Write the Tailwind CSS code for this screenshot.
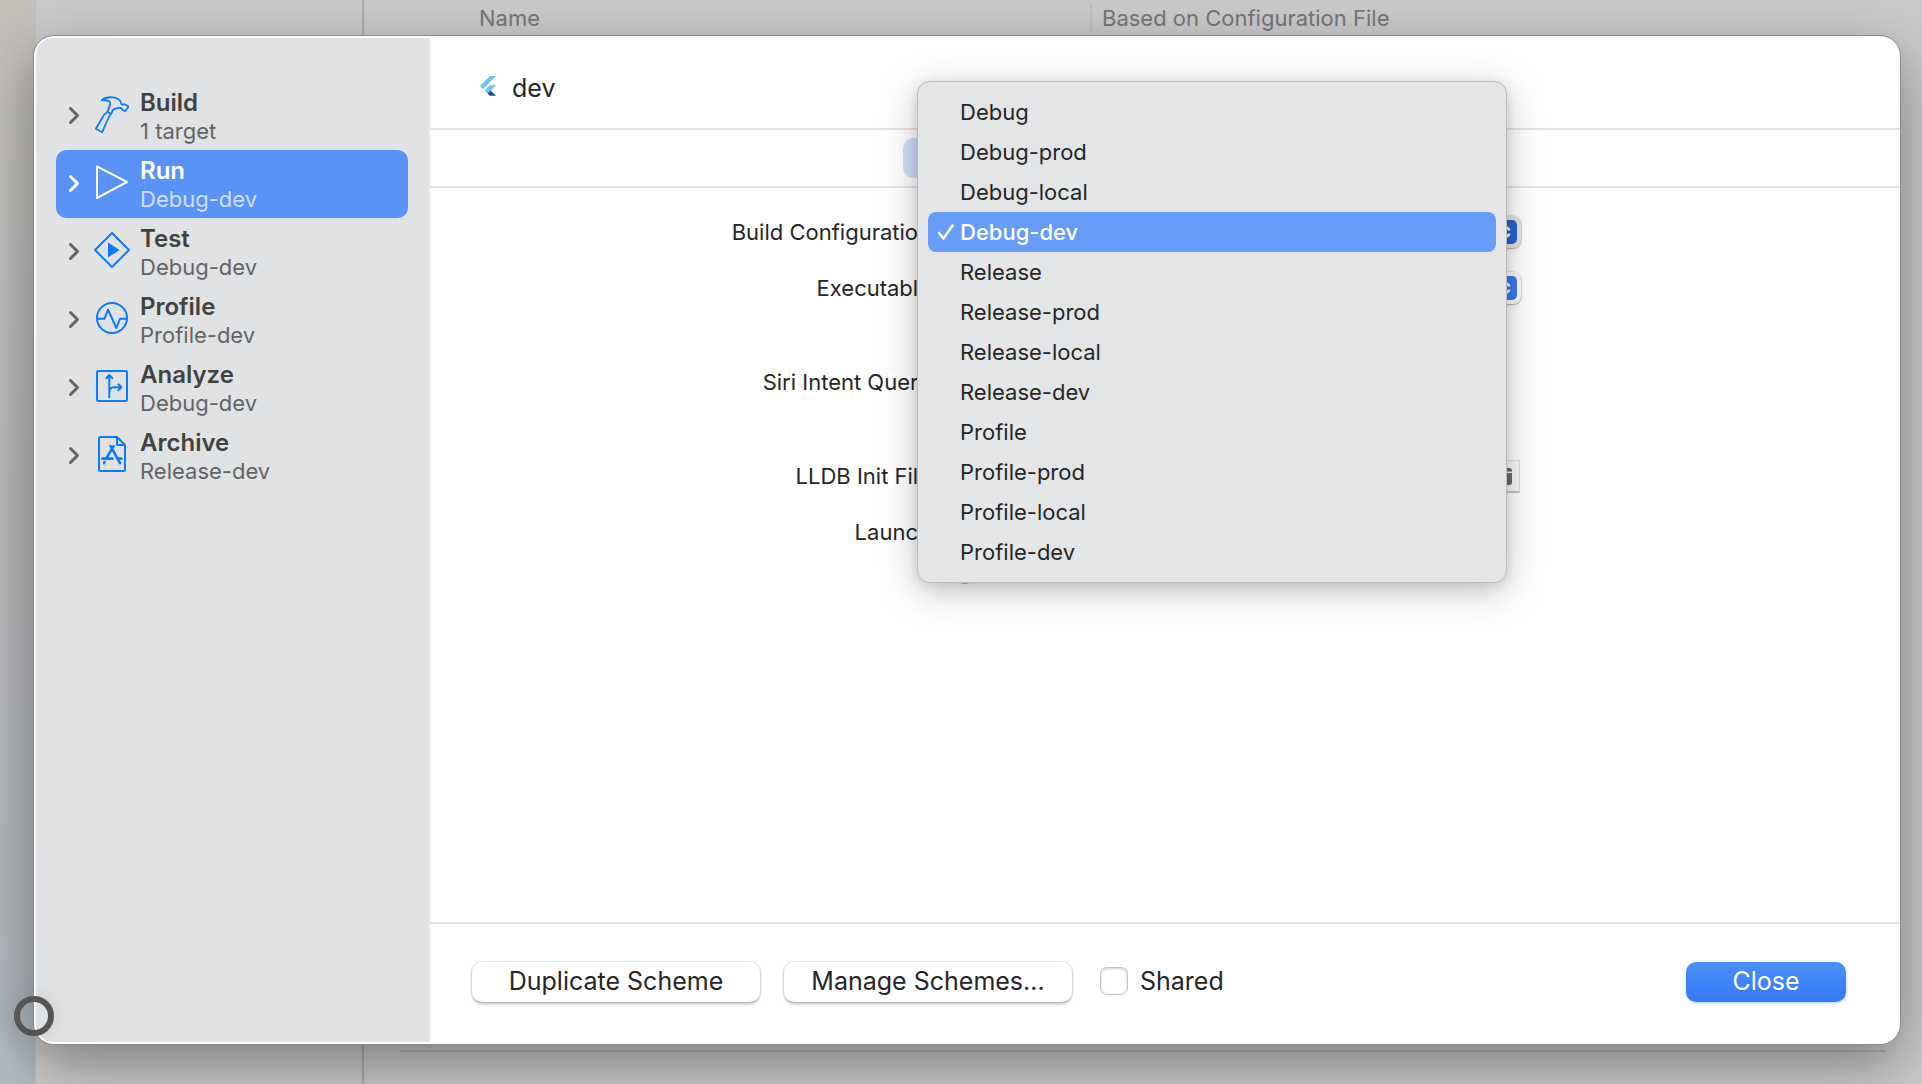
<!DOCTYPE html>
<html lang="en">
  <head>
    <meta charset="UTF-8" />
    <meta name="viewport" content="width=device-width, initial-scale=1.0" />
    <title>Edit Scheme</title>
    <script src="https://cdn.jsdelivr.net/npm/@tailwindcss/browser@4"></script>
  </head>
  <body class="relative h-screen overflow-hidden bg-[#cbcbcb] font-['Inter',sans-serif] text-[22px] leading-7 text-[#262626]">
    <!-- Project window behind the sheet -->
    <div class="flex h-full">
      <div class="w-[35px] bg-linear-to-b from-[#c4c1bb] via-[#b9b9bb] to-[#b2bac0]"></div>
      <div class="w-[329px] border-l border-r-2 border-l-[#bdbdbd] border-r-[#aeaeae]"></div>
      <div class="flex flex-1 flex-col justify-between">
        <div class="flex h-9 items-center text-[#777777]">
          <div class="w-[728px] border-r-2 border-[#c0c0c0] pl-[115px]">Name</div>
          <div class="pl-[10px]">Based on Configuration File</div>
        </div>
        <div class="mr-9 ml-9 h-[34px] border-t-2 border-[#b4b4b4]"></div>
      </div>
    </div>

    <!-- Scheme editor -->
    <div
      role="dialog"
      aria-label="Edit scheme"
      class="absolute top-9 right-[22px] bottom-10 left-[34px] flex rounded-[20px] bg-white shadow-[0_0_0_1px_#8c8c8c,0_20px_60px_rgba(0,0,0,0.4)]"
    >
      <nav class="my-[2px] ml-[2px] w-[394px] rounded-l-[18px] border-r-2 border-[#e8e8e8] bg-[#e1e2e4] px-5 pt-11">
        <ul>
          <li>
            <button class="flex h-17 w-full items-center rounded-[10px] pl-3 text-left text-[#636466]">
              <svg class="h-5 w-3" viewBox="0 0 12 20" fill="none" stroke="currentColor" stroke-width="3" stroke-linecap="round" stroke-linejoin="round"><path d="M2.5 2.5 9.5 9.5 2.5 16.5" /></svg>
              <svg class="ml-[14px] h-10 w-9 text-[#0a7bff]" viewBox="0 0 36 40" fill="none" stroke="currentColor" stroke-width="1.8" stroke-linejoin="round">
                <path d="M7.8 4.2C10.5 1.8 14 1 18.5 1.300 23 1.600 26.200 3.300 27.200 7.200 27.600 8.700 28.200 9 29.300 8.600L30.400 8.200 34.200 10.200 34 11.500 31.200 15 29.600 14.600C28.200 14.400 28.600 12.200 26.800 12 24 11.500 21.500 12.300 19.200 13.800 18 14.600 18.300 16 17.500 17.200 15.800 19.600 14.200 21.600 13.300 24.500L8.200 36.200 1.800 32.800 9.600 19.600C11 17.400 13.800 16.600 14.200 14.200 15 11 16.400 8.800 16.200 6.800 15.800 4 11.500 4.200 7.800 4.200Z" />
                <path d="M13.8 16.3 17.5 18" />
              </svg>
              <span class="ml-[10px] pt-[2px]">
                <span class="block text-[24px] font-semibold text-[#414242]">Build</span>
                <span class="block">1 target</span>
              </span>
            </button>
          </li>
          <li>
            <button aria-current="true" class="flex h-17 w-full items-center rounded-[10px] bg-[#5a93f7] pl-3 text-left text-[#cfdffc]">
              <svg class="h-5 w-3 text-white" viewBox="0 0 12 20" fill="none" stroke="currentColor" stroke-width="3" stroke-linecap="round" stroke-linejoin="round"><path d="M2.5 2.5 9.5 9.5 2.5 16.5" /></svg>
              <svg class="ml-[14px] h-10 w-9 text-white" viewBox="0 0 36 40" fill="none" stroke="currentColor" stroke-width="2" stroke-linejoin="round"><path d="M3 2.4 33 18 3 34Z" /></svg>
              <span class="ml-[10px] pt-[2px]">
                <span class="block text-[24px] font-semibold text-white">Run</span>
                <span class="block">Debug-dev</span>
              </span>
            </button>
          </li>
          <li>
            <button class="flex h-17 w-full items-center rounded-[10px] pl-3 text-left text-[#636466]">
              <svg class="h-5 w-3" viewBox="0 0 12 20" fill="none" stroke="currentColor" stroke-width="3" stroke-linecap="round" stroke-linejoin="round"><path d="M2.5 2.5 9.5 9.5 2.5 16.5" /></svg>
              <svg class="ml-[14px] h-10 w-9 text-[#0a7bff]" viewBox="0 0 36 40" fill="none" stroke="currentColor" stroke-width="2" stroke-linejoin="round">
                <path d="M18 1 35 18 18 35 1 18Z" />
                <path d="M14 10.5 25.5 18 14 25.5Z" fill="currentColor" stroke="none" />
              </svg>
              <span class="ml-[10px] pt-[2px]">
                <span class="block text-[24px] font-semibold text-[#414242]">Test</span>
                <span class="block">Debug-dev</span>
              </span>
            </button>
          </li>
          <li>
            <button class="flex h-17 w-full items-center rounded-[10px] pl-3 text-left text-[#636466]">
              <svg class="h-5 w-3" viewBox="0 0 12 20" fill="none" stroke="currentColor" stroke-width="3" stroke-linecap="round" stroke-linejoin="round"><path d="M2.5 2.5 9.5 9.5 2.5 16.5" /></svg>
              <svg class="ml-[14px] h-10 w-9 text-[#0a7bff]" viewBox="0 0 36 40" fill="none" stroke="currentColor" stroke-width="2" stroke-linejoin="round">
                <circle cx="18" cy="18" r="15" />
                <path d="M3 18.8H10.4L14 9.5 22.3 28 26 18.8H33" />
              </svg>
              <span class="ml-[10px] pt-[2px]">
                <span class="block text-[24px] font-semibold text-[#414242]">Profile</span>
                <span class="block">Profile-dev</span>
              </span>
            </button>
          </li>
          <li>
            <button class="flex h-17 w-full items-center rounded-[10px] pl-3 text-left text-[#636466]">
              <svg class="h-5 w-3" viewBox="0 0 12 20" fill="none" stroke="currentColor" stroke-width="3" stroke-linecap="round" stroke-linejoin="round"><path d="M2.5 2.5 9.5 9.5 2.5 16.5" /></svg>
              <svg class="ml-[14px] h-10 w-9 text-[#0a7bff]" viewBox="0 0 36 40" fill="none" stroke="currentColor" stroke-width="2" stroke-linejoin="round">
                <rect x="3" y="3" width="30" height="30" rx="1.5" />
                <path d="M15.3 30V7.2M11.8 10.8 15.3 7 18.8 10.8M15.3 24.5C15.3 21 17 19.2 20 19.2H27M23.8 15.6 27.4 19.2 23.8 22.8" />
              </svg>
              <span class="ml-[10px] pt-[2px]">
                <span class="block text-[24px] font-semibold text-[#414242]">Analyze</span>
                <span class="block">Debug-dev</span>
              </span>
            </button>
          </li>
          <li>
            <button class="flex h-17 w-full items-center rounded-[10px] pl-3 text-left text-[#636466]">
              <svg class="h-5 w-3" viewBox="0 0 12 20" fill="none" stroke="currentColor" stroke-width="3" stroke-linecap="round" stroke-linejoin="round"><path d="M2.5 2.5 9.5 9.5 2.5 16.5" /></svg>
              <svg class="ml-[14px] h-10 w-9 text-[#0a7bff]" viewBox="0 0 36 40" fill="none" stroke="currentColor" stroke-width="2" stroke-linejoin="round">
                <path d="M6.5 1H23L31 9V33.5Q31 35 29.5 35H6.5Q5 35 5 33.5V2.5Q5 1 6.5 1ZM23 1V9H31" />
                <path d="M8.5 22.6H18.5M23.5 22.6H27.5M19.6 10.2 12.5 22M10.6 26.2 10 27.2M16.600 10.2 26 27.2" stroke-width="2.6" stroke-linecap="round" />
              </svg>
              <span class="ml-[10px] pt-[2px]">
                <span class="block text-[24px] font-semibold text-[#414242]">Archive</span>
                <span class="block">Release-dev</span>
              </span>
            </button>
          </li>
        </ul>
      </nav>

      <main class="flex flex-1 flex-col">
        <header class="flex h-[94px] items-center border-b-2 border-[#e4e4e4] pt-3 pl-12 text-[25px]">
          <svg class="h-6 w-5" viewBox="0 0 24 29">
            <path fill="#6cc4f8" d="M14.3 0 2.3 12 6 15.7 21.7 0ZM14.3 11.1 7.9 17.5 11.5 21.2 21.7 11.1Z" />
            <path fill="#1d4f97" d="M11.5 21.2 14.3 24H21.7L15.2 17.5Z" />
          </svg>
          <h1 class="pl-[14px]">dev</h1>
        </header>
        <div class="flex h-[58px] items-center justify-center border-b-2 border-[#e4e4e4]">
          <div role="tablist" class="grid h-10 w-[524px] grid-cols-4">
            <button role="tab" aria-selected="true" aria-label="Info" class="rounded-[10px] bg-[#cfe0fb]"></button>
            <button role="tab" aria-selected="false" aria-label="Arguments"></button>
            <button role="tab" aria-selected="false" aria-label="Options"></button>
            <button role="tab" aria-selected="false" aria-label="Diagnostics"></button>
          </div>
        </div>

        <form class="grid flex-1 grid-cols-[512fr_579fr_379fr] content-start pt-4">
          <label for="config" class="col-start-1 self-center pr-[11px] text-right">Build Configuration</label>
          <div class="relative flex h-14 items-center">
            <select id="config" class="h-8 w-full appearance-none rounded-[8px] bg-[#e4e4e4] px-4 shadow-[0_0_0_1px_rgba(0,0,0,0.08),0_1px_2px_rgba(0,0,0,0.3)]">
              <option>Debug-dev</option>
            </select>
            <svg class="pointer-events-none absolute right-1 h-6 w-6 rounded-[5px] bg-[#2865d6]" viewBox="0 0 24 24" fill="none" stroke="#ffffff" stroke-width="2.5" stroke-linecap="round" stroke-linejoin="round"><path d="M8 9.5 12 6 16 9.5M8 14.5 12 18 16 14.5" /></svg>

            <!-- Open pop-up menu -->
            <ul
              role="listbox"
              aria-label="Build Configuration"
              class="absolute -top-[123px] -left-[25px] z-10 w-[590px] rounded-[13px] border border-[#b9bbbc] bg-[#e4e5e7] p-[10px] shadow-[0_2px_10px_rgba(0,0,0,0.1),0_8px_36px_rgba(0,0,0,0.25)]"
            >
              <li role="option" aria-selected="false" class="flex h-10 items-center rounded-lg pl-8">Debug</li>
              <li role="option" aria-selected="false" class="flex h-10 items-center rounded-lg pl-8">Debug-prod</li>
              <li role="option" aria-selected="false" class="flex h-10 items-center rounded-lg pl-8">Debug-local</li>
              <li role="option" aria-selected="true" class="flex h-10 items-center rounded-lg bg-[#679cf8] pl-[9px] font-medium text-white">
                <svg class="mr-[5px] h-[18px] w-[18px]" viewBox="0 0 18 18" fill="none" stroke="currentColor" stroke-width="2.6" stroke-linecap="round" stroke-linejoin="round"><path d="M2 10 6.5 15.5 15.5 2.5" /></svg>
                Debug-dev
              </li>
              <li role="option" aria-selected="false" class="flex h-10 items-center rounded-lg pl-8">Release</li>
              <li role="option" aria-selected="false" class="flex h-10 items-center rounded-lg pl-8">Release-prod</li>
              <li role="option" aria-selected="false" class="flex h-10 items-center rounded-lg pl-8">Release-local</li>
              <li role="option" aria-selected="false" class="flex h-10 items-center rounded-lg pl-8">Release-dev</li>
              <li role="option" aria-selected="false" class="flex h-10 items-center rounded-lg pl-8">Profile</li>
              <li role="option" aria-selected="false" class="flex h-10 items-center rounded-lg pl-8">Profile-prod</li>
              <li role="option" aria-selected="false" class="flex h-10 items-center rounded-lg pl-8">Profile-local</li>
              <li role="option" aria-selected="false" class="flex h-10 items-center rounded-lg pl-8">Profile-dev</li>
            </ul>
          </div>

          <label for="executable" class="col-start-1 self-center pr-[11px] text-right">Executable</label>
          <div class="relative flex h-14 items-center">
            <select id="executable" class="h-8 w-full appearance-none rounded-[8px] bg-[#fafafa] px-4 shadow-[0_0_0_1px_rgba(0,0,0,0.08),0_1px_2px_rgba(0,0,0,0.3)]"></select>
            <svg class="pointer-events-none absolute right-1 h-6 w-6 rounded-[5px] bg-[#3a7cec]" viewBox="0 0 24 24" fill="none" stroke="#ffffff" stroke-width="2.5" stroke-linecap="round" stroke-linejoin="round"><path d="M8 9.5 12 6 16 9.5M8 14.5 12 18 16 14.5" /></svg>
          </div>

          <label for="siri" class="col-start-1 mt-[38px] self-center pr-[11px] text-right">Siri Intent Query</label>
          <div class="mt-[38px] flex h-14 items-center pr-12">
            <input id="siri" type="text" class="h-8 w-full border border-[#d4d4d4] px-2" />
          </div>

          <label for="lldb" class="col-start-1 mt-[38px] self-center pr-[11px] text-right">LLDB Init File</label>
          <div class="mt-[38px] flex h-14 items-center pr-px">
            <input id="lldb" type="text" class="h-8 flex-1 border border-[#d4d4d4] px-2" />
            <button type="button" aria-label="Choose file" class="flex h-[33px] w-10 items-center justify-center border border-b-2 border-[#dfdfdf] border-b-[#c4c4c4] bg-[#fafafa]">
              <svg class="h-5 w-6" viewBox="0 0 24 20" fill="#6b6b6b"><path d="M0 4Q0 1 3 1H9L11 2H21Q24 2 24 5V5.5H0ZM0 7H24V16Q24 19 21 19H3Q0 19 0 16Z" /></svg>
            </button>
          </div>

          <span class="col-start-1 self-center pr-[11px] text-right">Launch</span>
          <div class="flex h-14 items-center pl-[11px]">
            <input type="radio" name="launch" aria-label="Automatically" checked class="h-6 w-6" />
          </div>
          <div class="col-start-2 flex h-6 items-center pl-[11px]">
            <input type="radio" name="launch" aria-label="Wait for the executable to be launched" class="h-6 w-6 appearance-none rounded-full border border-[#b5b5b5] bg-white" />
          </div>
        </form>

        <footer class="flex h-[122px] items-center border-t-2 border-[#e4e4e4] pr-[54px] pb-1 pl-[42px] text-[25px]">
          <button class="h-10 w-72 rounded-[10px] bg-white pb-[2px] shadow-[0_0_0_1px_rgba(0,0,0,0.08),0_2px_3px_rgba(0,0,0,0.25)]">Duplicate Scheme</button>
          <button class="ml-6 h-10 w-72 rounded-[10px] bg-white pb-[2px] shadow-[0_0_0_1px_rgba(0,0,0,0.08),0_2px_3px_rgba(0,0,0,0.25)]">Manage Schemes...</button>
          <label class="ml-7 flex items-center gap-3 pb-[2px]">
            <input type="checkbox" class="h-7 w-7 appearance-none rounded-[7px] border border-[#c4c4c4] bg-white shadow-[inset_0_1px_3px_rgba(0,0,0,0.2)]" />
            Shared
          </label>
          <button class="ml-auto h-10 w-40 rounded-[10px] bg-linear-to-b from-[#4a90f8] to-[#3478f6] pb-[2px] text-white shadow-[0_1px_3px_rgba(52,120,246,0.4)]">Close</button>
        </footer>
      </main>

      <!-- Resize marker on the sheet's lower left corner -->
      <div class="absolute bottom-2 -left-5 h-10 w-10 rounded-full border-6 border-[#565656] shadow-[0_0_30px_rgba(0,0,0,0.1)]"></div>
    </div>
  </body>
</html>
